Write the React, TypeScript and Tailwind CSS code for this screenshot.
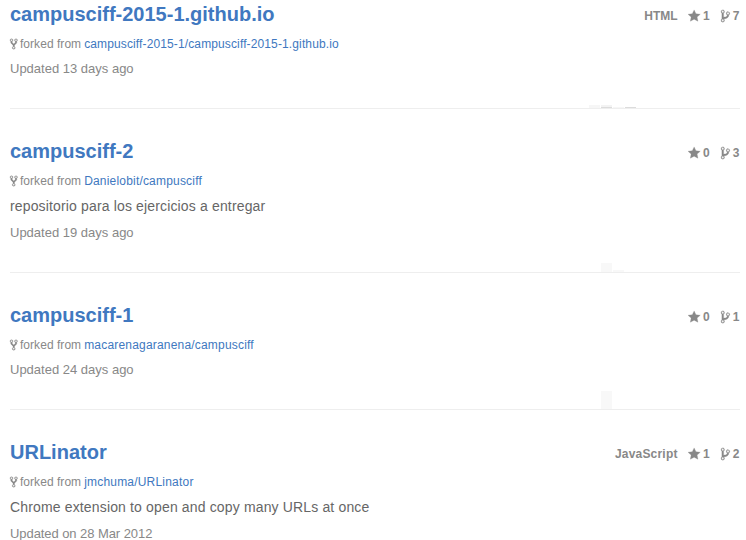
type Bar = { box: string };

type Repo = {
  name: string;
  source: string;
  description?: string;
  updated: string;
  language?: string;
  stars: number;
  forks: number;
  bars: Bar[];
  sourceSpacing: string;
  updatedSpacing: string;
};

const repos: Repo[] = [
  {
    name: 'campusciff-2015-1.github.io',
    source: 'campusciff-2015-1/campusciff-2015-1.github.io',
    updated: 'Updated 13 days ago',
    language: 'HTML',
    stars: 1,
    forks: 7,
    bars: [
      { box: 'h-[3px] bg-[#f6f6f6]' },
      { box: 'h-[3px] border-b border-[#dcdcdc] bg-[#f3f3f3]' },
      { box: 'h-px bg-[#f6f6f6]' },
      { box: 'h-px bg-[#dcdcdc]' },
    ],
    sourceSpacing: 'tracking-[0.125px]',
    updatedSpacing: '',
  },
  {
    name: 'campusciff-2',
    source: 'Danielobit/campusciff',
    description: 'repositorio para los ejercicios a entregar',
    updated: 'Updated 19 days ago',
    stars: 0,
    forks: 3,
    bars: [{ box: '' }, { box: 'h-[9px] bg-[#f8f8f8]' }, { box: 'h-[2px] bg-[#f8f8f8]' }, { box: '' }],
    sourceSpacing: 'tracking-[0.19px]',
    updatedSpacing: '',
  },
  {
    name: 'campusciff-1',
    source: 'macarenagaranena/campusciff',
    updated: 'Updated 24 days ago',
    stars: 0,
    forks: 1,
    bars: [{ box: '' }, { box: 'h-[18px] bg-[#f8f8f8]' }, { box: '' }, { box: '' }],
    sourceSpacing: 'tracking-[0.19px]',
    updatedSpacing: '',
  },
  {
    name: 'URLinator',
    source: 'jmchuma/URLinator',
    description: 'Chrome extension to open and copy many URLs at once',
    updated: 'Updated on 28 Mar 2012',
    language: 'JavaScript',
    stars: 1,
    forks: 2,
    bars: [],
    sourceSpacing: 'tracking-[0.2px]',
    updatedSpacing: 'tracking-[-0.07px]',
  },
];

function StarIcon() {
  return (
    <svg viewBox="0 0 14 16" className="h-[14px] w-[12.25px] overflow-visible fill-current stroke-current [stroke-width:0.3]">
      <path d="M14 6l-4.9-.64L7 1 4.9 5.36 0 6l3.6 3.26L2.67 14 7 11.67 11.33 14l-.93-4.74z" />
    </svg>
  );
}

function BranchIcon() {
  return (
    <svg viewBox="0 0 10 16" className="h-[14px] w-[8.75px] overflow-visible fill-current stroke-current [stroke-width:0.3]">
      <path d="M10 5c0-1.11-.89-2-2-2a1.993 1.993 0 0 0-1 3.72v.3c-.02.52-.23.98-.63 1.38-.4.4-.86.61-1.38.63-.83.02-1.48.16-2 .45V4.72a1.993 1.993 0 0 0-1-3.72C.88 1 0 1.89 0 3a2 2 0 0 0 1 1.72v6.56c-.59.35-1 .99-1 1.72 0 1.11.89 2 2 2 1.11 0 2-.89 2-2 0-.53-.2-1-.53-1.36.09-.06.48-.41.59-.47.25-.11.56-.17.94-.17 1.05-.05 1.95-.45 2.75-1.25S8.95 7.77 9 6.73h-.02C9.59 6.37 10 5.73 10 5zM2 1.8c.66 0 1.2.55 1.2 1.2 0 .65-.55 1.2-1.2 1.2C1.35 4.2.8 3.65.8 3c0-.65.55-1.2 1.2-1.2zm0 12.41c-.66 0-1.2-.55-1.2-1.2 0-.65.55-1.2 1.2-1.2.65 0 1.2.55 1.2 1.2 0 .65-.55 1.2-1.2 1.2zm6-8c-.66 0-1.2-.55-1.2-1.2 0-.65.55-1.2 1.2-1.2.65 0 1.2.55 1.2 1.2 0 .65-.55 1.2-1.2 1.2z" />
    </svg>
  );
}

function ForkedIcon() {
  return (
    <svg viewBox="0 0 10 16" className="-mt-px h-[12px] w-[7.5px] overflow-visible fill-current stroke-current [stroke-width:0.35]">
      <path d="M8 1a1.993 1.993 0 0 0-1 3.72V6L5 8 3 6V4.72A1.993 1.993 0 0 0 2 1a1.993 1.993 0 0 0-1 3.72V6.5l3 3v1.78A1.993 1.993 0 0 0 5 15a1.993 1.993 0 0 0 1-3.72V9.5l3-3V4.72A1.993 1.993 0 0 0 8 1zM2 4.2C1.34 4.2.8 3.65.8 3c0-.65.55-1.2 1.2-1.2.65 0 1.2.55 1.2 1.2 0 .65-.55 1.2-1.2 1.2zm3 10c-.66 0-1.2-.55-1.2-1.2 0-.65.55-1.2 1.2-1.2.65 0 1.2.55 1.2 1.2 0 .65-.55 1.2-1.2 1.2zm3-10c-.66 0-1.2-.55-1.2-1.2 0-.65.55-1.2 1.2-1.2.65 0 1.2.55 1.2 1.2 0 .65-.55 1.2-1.2 1.2z" />
    </svg>
  );
}

function RepoItem({ repo, first }: { repo: Repo; first: boolean }) {
  return (
    <li className={`relative flex items-start justify-between border-b border-[#eeeeee] pb-[29px] ${first ? 'pt-[2px]' : 'pt-[30px]'}`}>
      <div className="whitespace-nowrap">
        <h3 className="h-6 text-[20px] leading-6 font-bold text-[#4078c0]">{repo.name}</h3>
        <p className="mt-2 flex h-5 items-center text-[12px] leading-5 text-[#888888]">
          <ForkedIcon />
          <span className="ml-[2.5px] tracking-[0.04px]">forked from</span>
          <a className={`ml-[3px] text-[#4078c0] ${repo.sourceSpacing}`}>{repo.source}</a>
        </p>
        {repo.description && (
          <p className="mt-[5px] h-5 text-[14px] leading-5 tracking-[0.15px] text-[#666666]">{repo.description}</p>
        )}
        <p className={`h-5 text-[13px] leading-5 text-[#888888] ${repo.updatedSpacing} ${repo.description ? 'mt-[7px]' : 'mt-[5px]'}`}>
          {repo.updated}
        </p>
      </div>
      <div className="mt-1 flex h-5 items-center text-[12px] leading-5 font-bold text-[#888888]">
        {repo.language && (
          <span className={`mr-[10px] ${repo.language === 'JavaScript' ? 'tracking-[0.2px]' : ''}`}>{repo.language}</span>
        )}
        <StarIcon />
        <span className="ml-[3px]">{repo.stars}</span>
        <span className="ml-[11px] flex">
          <BranchIcon />
        </span>
        <span className="mr-[0.5px] ml-[3.5px]">{repo.forks}</span>
      </div>
      <div className="absolute right-[104px] bottom-0 flex items-end gap-px">
        {repo.bars.map((bar, i) => (
          <span key={i} className={`w-[11px] ${bar.box}`} />
        ))}
      </div>
    </li>
  );
}

export default function App() {
  return (
    <div className="h-[540px] w-[746px] overflow-hidden bg-white pr-[6px] pl-[10px] font-['Liberation_Sans',Arial,sans-serif]">
      <ul>
        {repos.map((repo, i) => (
          <RepoItem key={repo.name} repo={repo} first={i === 0} />
        ))}
      </ul>
    </div>
  );
}
